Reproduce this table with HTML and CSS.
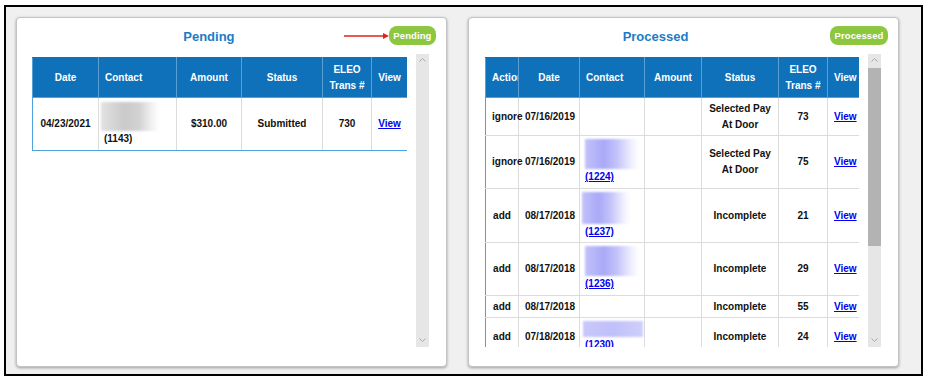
FILE: index.html
```html
<!DOCTYPE html>
<html>
<head>
<meta charset="utf-8">
<link rel="stylesheet" href="styles.css">
</head>
<body>
<div class="frame">
  <div class="panel">
    <div class="panel-head">
      <div class="title">Pending</div>
      <svg class="arrow" width="46" height="8" viewBox="0 0 46 8"><line x1="0" y1="4" x2="40" y2="4" stroke="#e3201b" stroke-width="1.5"/><path d="M39 1 L45 4 L39 7 Z" fill="#e3201b"/></svg>
      <span class="badge">Pending</span>
    </div>
    <div class="panel-body">
      <div class="scroll">
        <table class="grid">
          <colgroup><col style="width:66px"><col style="width:78px"><col style="width:65px"><col style="width:81px"><col style="width:49px"><col style="width:36px"></colgroup>
          <thead>
            <tr><th>Date</th><th class="left">Contact</th><th>Amount</th><th>Status</th><th>ELEO Trans #</th><th>View</th></tr>
          </thead>
          <tbody>
            <tr>
              <td>04/23/2021</td>
              <td class="left"><div class="blur gray"></div><span>(1143)</span></td>
              <td>$310.00</td>
              <td>Submitted</td>
              <td>730</td>
              <td><a href="#">View</a></td>
            </tr>
          </tbody>
        </table>
      </div>
      <div class="sbar">
        <svg class="chev" width="7" height="4" viewBox="0 0 7 4"><path d="M0.5 3.5 L3.5 0.5 L6.5 3.5" fill="none" stroke="#a8a8a8" stroke-width="1"/></svg>
        <div class="track"></div>
        <svg class="chev" width="7" height="4" viewBox="0 0 7 4"><path d="M0.5 0.5 L3.5 3.5 L6.5 0.5" fill="none" stroke="#a8a8a8" stroke-width="1"/></svg>
      </div>
    </div>
  </div>

  <div class="panel">
    <div class="panel-head">
      <div class="title">Processed</div>
      <span class="badge">Processed</span>
    </div>
    <div class="panel-body second">
      <div class="scroll">
        <table class="grid">
          <colgroup><col style="width:33px"><col style="width:61px"><col style="width:65px"><col style="width:57px"><col style="width:77px"><col style="width:49px"><col style="width:32px"></colgroup>
          <thead>
            <tr><th>Action</th><th>Date</th><th class="left">Contact</th><th>Amount</th><th>Status</th><th>ELEO Trans #</th><th>View</th></tr>
          </thead>
          <tbody>
            <tr><td>ignore</td><td>07/16/2019</td><td class="left"></td><td></td><td>Selected Pay At Door</td><td>73</td><td><a href="#">View</a></td></tr>
            <tr><td>ignore</td><td>07/16/2019</td><td class="left"><div class="blur purple p1"></div><a href="#">(1224)</a></td><td></td><td>Selected Pay At Door</td><td>75</td><td><a href="#">View</a></td></tr>
            <tr><td>add</td><td>08/17/2018</td><td class="left"><div class="blur purple p2"></div><a href="#">(1237)</a></td><td></td><td>Incomplete</td><td>21</td><td><a href="#">View</a></td></tr>
            <tr><td>add</td><td>08/17/2018</td><td class="left"><div class="blur purple p1"></div><a href="#">(1236)</a></td><td></td><td>Incomplete</td><td>29</td><td><a href="#">View</a></td></tr>
            <tr><td>add</td><td>08/17/2018</td><td class="left"></td><td></td><td>Incomplete</td><td>55</td><td><a href="#">View</a></td></tr>
            <tr><td>add</td><td>07/18/2018</td><td class="left"><div class="blur purple p3"></div><a href="#">(1230)</a></td><td></td><td>Incomplete</td><td>24</td><td><a href="#">View</a></td></tr>
          </tbody>
        </table>
      </div>
      <div class="sbar">
        <svg class="chev" width="7" height="4" viewBox="0 0 7 4"><path d="M0.5 3.5 L3.5 0.5 L6.5 3.5" fill="none" stroke="#a8a8a8" stroke-width="1"/></svg>
        <div class="thumb"></div>
        <div class="track"></div>
        <svg class="chev" width="7" height="4" viewBox="0 0 7 4"><path d="M0.5 0.5 L3.5 3.5 L6.5 0.5" fill="none" stroke="#a8a8a8" stroke-width="1"/></svg>
      </div>
    </div>
  </div>
</div>
</body>
</html>
```

FILE: styles.css
```css
html, body {
  margin: 0;
  padding: 0;
  background: #ffffff;
  font-family: "Liberation Sans", Arial, sans-serif;
}

.frame {
  box-sizing: border-box;
  margin: 5px 0 0 4px;
  width: 919px;
  height: 371px;
  border: 2px solid #000;
  background: #f0f0f0;
  padding: 10px 0 0 10px;
  display: flex;
  gap: 21px;
  align-items: flex-start;
}

.panel {
  box-sizing: border-box;
  width: 431px;
  height: 350px;
  background: #fff;
  border: 1px solid #c4c4c4;
  border-radius: 4px;
  box-shadow: 0 1px 3px rgba(0, 0, 0, 0.35);
  display: flex;
  flex-direction: column;
}

.panel-head {
  position: relative;
  display: flex;
  align-items: center;
  padding: 8px 10px 0 12px;
  height: 19px;
}

.title {
  flex: 1;
  text-align: center;
  font-size: 13px;
  font-weight: bold;
  color: #1b7cc5;
  padding-top: 1px;
}

.arrow {
  position: absolute;
  left: 327px;
  top: 14px;
}

.badge {
  display: inline-flex;
  align-items: center;
  height: 19px;
  padding: 0 4.5px;
  border-radius: 8px;
  background: #8dc63f;
  color: #fff;
  font-size: 9.5px;
  font-weight: bold;
  letter-spacing: 0.1px;
}

.panel-body {
  display: flex;
  margin-top: 9px;
  height: 293px;
  padding: 0 17px 0 15px;
  gap: 9px;
}

.panel-body.second {
  padding-left: 16px;
}

.scroll {
  flex: 1;
  overflow: hidden;
  padding-top: 3px;
}

.grid {
  width: 100%;
  table-layout: fixed;
  border-collapse: collapse;
  border: 1px solid #4ea2e0;
  font-size: 10px;
  font-weight: bold;
  line-height: 15.5px;
}

.grid th {
  background: #0e71b9;
  color: #fff;
  font-weight: bold;
  text-align: center;
  vertical-align: middle;
  padding: 4px 6px;
  border: 1px solid #5a9fd4;
  border-top-color: #0e71b9;
  overflow: hidden;
  white-space: normal;
}

.grid td {
  color: #111;
  text-align: center;
  vertical-align: middle;
  padding: 3px 6px;
  border: 1px solid #dcdcdc;
}

.grid tr td:first-child { border-left-color: #4ea2e0; }
.grid tr td:last-child { border-right-color: #4ea2e0; }
.grid tbody tr:last-child td { border-bottom-color: #4ea2e0; }

.grid th.left, .grid td.left {
  text-align: left;
}

.grid td.left {
  padding-left: 5px;
}

.grid a {
  color: #0000ee;
  text-decoration: underline;
}

.blur {
  height: 29px;
  filter: blur(1.2px);
}

.gray {
  width: 58px;
  margin-left: -3px;
  margin-top: 1px;
  background: linear-gradient(90deg, #e2e2e2 0%, #cacaca 40%, #d2d2d2 65%, #f4f4f4 90%, #ffffff 100%);
}

.purple {
  background: linear-gradient(90deg, #c2c2fb 0%, #a9a9f8 35%, #c4c4fb 60%, #eeeefe 85%, #ffffff 100%);
}

.p1 { width: 54px; height: 30px; }
.p2 { width: 48px; height: 32px; margin-left: -3px; }
.p3 { width: 60px; height: 16px; margin-left: -2px; background: linear-gradient(90deg, #c8c8fb 0%, #c0c0fa 50%, #cfcffc 100%); }

.sbar {
  width: 13px;
  background: #e6e6e6;
  display: flex;
  flex-direction: column;
  align-items: center;
}

.chev {
  flex: none;
  margin: 4px 0 6px;
}

.sbar .chev:last-child {
  margin: 6px 0 5px;
}

.thumb {
  width: 13px;
  height: 178px;
  background: #b3b3b3;
}

.track {
  flex: 1;
}
```
